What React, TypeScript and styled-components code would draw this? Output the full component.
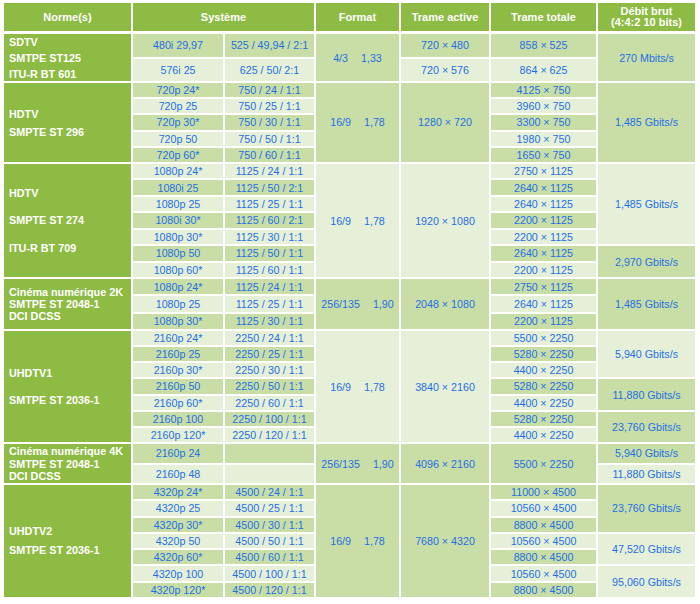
import React from "react";
import styled, { createGlobalStyle } from "styled-components";

const Global = createGlobalStyle`
  html, body { margin: 0; padding: 0; background: #ffffff; }
  body { font-family: "Liberation Sans", Arial, sans-serif; }
`;

const COLS = "127px 90px 89px 83px 88px 105px 97px";
const GREEN = "#8dbb43";
const DARK = "#c9dea6";
const LIGHT = "#e6f0d8";
const BLUE = "#1e6fe4";

const Page = styled.div`
  padding: 3px 0 0 4px;
  width: 700px;
  box-sizing: border-box;
`;

const Header = styled.div`
  display: grid;
  grid-template-columns: ${COLS};
  column-gap: 2px;
  height: 28px;
  margin-bottom: 3px;
`;

const HeadCell = styled.div<{ $span?: number }>`
  grid-column: span ${(p) => p.$span ?? 1};
  background: ${GREEN};
  color: #ffffff;
  font-weight: bold;
  font-size: 11px;
  line-height: 11px;
  display: flex;
  align-items: center;
  justify-content: center;
  text-align: center;
`;

const Body = styled.div`
  display: flex;
  flex-direction: column;
  gap: 2px;
`;

const Group = styled.div<{ $h: number; $n: number }>`
  display: grid;
  grid-template-columns: ${COLS};
  grid-template-rows: repeat(${(p) => p.$n}, 1fr);
  column-gap: 2px;
  row-gap: 2px;
  height: ${(p) => p.$h}px;
`;

const NormCell = styled.div<{ $n: number; $lh: number }>`
  grid-column: 1;
  grid-row: 1 / span ${(p) => p.$n};
  background: ${GREEN};
  color: #ffffff;
  font-weight: bold;
  font-size: 10.8px;
  line-height: ${(p) => p.$lh}px;
  padding: 1px 0 0 5px;
  display: flex;
  flex-direction: column;
  justify-content: center;
  white-space: nowrap;
`;

const Cell = styled.div<{ $dark: boolean; $col: number; $row: number; $span: number }>`
  grid-column: ${(p) => p.$col};
  grid-row: ${(p) => p.$row} / span ${(p) => p.$span};
  background: ${(p) => (p.$dark ? DARK : LIGHT)};
  color: ${BLUE};
  font-size: 10.7px;
  display: flex;
  align-items: center;
  justify-content: center;
  white-space: nowrap;
  gap: 13px;
`;

type Span = [string, number];

interface G {
  norm: string[];
  lh: number;
  h: number;
  n: number;
  dark0: boolean;
  sys1: Span[];
  sys2: Span[];
  fmt: [string, string];
  ta: Span[];
  tt: Span[];
  deb: Span[];
}

const one = (xs: string[]): Span[] => xs.map((x) => [x, 1]);

const groups: G[] = [
  {
    norm: ["SDTV", "SMTPE ST125", "ITU-R BT 601"],
    lh: 16,
    h: 47,
    n: 2,
    dark0: true,
    sys1: one(["480i 29,97", "576i 25"]),
    sys2: one(["525 / 49,94 / 2:1", "625 / 50/ 2:1"]),
    fmt: ["4/3", "1,33"],
    ta: one(["720 × 480", "720 × 576"]),
    tt: one(["858 × 525", "864 × 625"]),
    deb: [["270 Mbits/s", 2]],
  },
  {
    norm: ["HDTV", "SMPTE ST 296"],
    lh: 18,
    h: 79,
    n: 5,
    dark0: true,
    sys1: one(["720p 24*", "720p 25", "720p 30*", "720p 50", "720p 60*"]),
    sys2: one(["750 / 24 / 1:1", "750 / 25 / 1:1", "750 / 30 / 1:1", "750 / 50 / 1:1", "750 / 60 / 1:1"]),
    fmt: ["16/9", "1,78"],
    ta: [["1280 × 720", 5]],
    tt: one(["4125 × 750", "3960 × 750", "3300 × 750", "1980 × 750", "1650 × 750"]),
    deb: [["1,485 Gbits/s", 5]],
  },
  {
    norm: ["HDTV", "SMPTE ST 274", "ITU-R BT 709"],
    lh: 27.5,
    h: 113,
    n: 7,
    dark0: false,
    sys1: one(["1080p 24*", "1080i 25", "1080p 25", "1080i 30*", "1080p 30*", "1080p 50", "1080p 60*"]),
    sys2: one([
      "1125 / 24 / 1:1",
      "1125 / 50 / 2:1",
      "1125 / 25 / 1:1",
      "1125 / 60 / 2:1",
      "1125 / 30 / 1:1",
      "1125 / 50 / 1:1",
      "1125 / 60 / 1:1",
    ]),
    fmt: ["16/9", "1,78"],
    ta: [["1920 × 1080", 7]],
    tt: one([
      "2750 × 1125",
      "2640 × 1125",
      "2640 × 1125",
      "2200 × 1125",
      "2200 × 1125",
      "2640 × 1125",
      "2200 × 1125",
    ]),
    deb: [
      ["1,485 Gbits/s", 5],
      ["2,970 Gbits/s", 2],
    ],
  },
  {
    norm: ["Cinéma numérique 2K", "SMTPE ST 2048-1", "DCI DCSS"],
    lh: 12,
    h: 50,
    n: 3,
    dark0: true,
    sys1: one(["1080p 24*", "1080p 25", "1080p 30*"]),
    sys2: one(["1125 / 24 / 1:1", "1125 / 25 / 1:1", "1125 / 30 / 1:1"]),
    fmt: ["256/135", "1,90"],
    ta: [["2048 × 1080", 3]],
    tt: one(["2750 × 1125", "2640 × 1125", "2200 × 1125"]),
    deb: [["1,485 Gbits/s", 3]],
  },
  {
    norm: ["UHDTV1", "SMTPE ST 2036-1"],
    lh: 27.5,
    h: 111,
    n: 7,
    dark0: false,
    sys1: one(["2160p 24*", "2160p 25", "2160p 30*", "2160p 50", "2160p 60*", "2160p 100", "2160p 120*"]),
    sys2: one([
      "2250 / 24 / 1:1",
      "2250 / 25 / 1:1",
      "2250 / 30 / 1:1",
      "2250 / 50 / 1:1",
      "2250 / 60 / 1:1",
      "2250 / 100 / 1:1",
      "2250 / 120 / 1:1",
    ]),
    fmt: ["16/9", "1,78"],
    ta: [["3840 × 2160", 7]],
    tt: one([
      "5500 × 2250",
      "5280 × 2250",
      "4400 × 2250",
      "5280 × 2250",
      "4400 × 2250",
      "5280 × 2250",
      "4400 × 2250",
    ]),
    deb: [
      ["5,940 Gbits/s", 3],
      ["11,880 Gbits/s", 2],
      ["23,760 Gbits/s", 2],
    ],
  },
  {
    norm: ["Cinéma numérique 4K", "SMTPE ST 2048-1", "DCI DCSS"],
    lh: 12.5,
    h: 39,
    n: 2,
    dark0: true,
    sys1: one(["2160p 24", "2160p 48"]),
    sys2: one(["", ""]),
    fmt: ["256/135", "1,90"],
    ta: [["4096 × 2160", 2]],
    tt: [["5500 × 2250", 2]],
    deb: [
      ["5,940 Gbits/s", 1],
      ["11,880 Gbits/s", 1],
    ],
  },
  {
    norm: ["UHDTV2", "SMTPE ST 2036-1"],
    lh: 19,
    h: 112,
    n: 7,
    dark0: true,
    sys1: one(["4320p 24*", "4320p 25", "4320p 30*", "4320p 50", "4320p 60*", "4320p 100", "4320p 120*"]),
    sys2: one([
      "4500 / 24 / 1:1",
      "4500 / 25 / 1:1",
      "4500 / 30 / 1:1",
      "4500 / 50 / 1:1",
      "4500 / 60 / 1:1",
      "4500 / 100 / 1:1",
      "4500 / 120 / 1:1",
    ]),
    fmt: ["16/9", "1,78"],
    ta: [["7680 × 4320", 7]],
    tt: one([
      "11000 × 4500",
      "10560 × 4500",
      "8800 × 4500",
      "10560 × 4500",
      "8800 × 4500",
      "10560 × 4500",
      "8800 × 4500",
    ]),
    deb: [
      ["23,760 Gbits/s", 3],
      ["47,520 Gbits/s", 2],
      ["95,060 Gbits/s", 2],
    ],
  },
];

function Column({ items, col, dark0 }: { items: Span[]; col: number; dark0: boolean }) {
  let row = 1;
  return (
    <>
      {items.map(([text, span], i) => {
        const r = row;
        row += span;
        const dark = (r - 1) % 2 === 0 ? dark0 : !dark0;
        return (
          <Cell key={i} $col={col} $row={r} $span={span} $dark={dark}>
            {text}
          </Cell>
        );
      })}
    </>
  );
}

function GroupBlock({ g }: { g: G }) {
  return (
    <Group $h={g.h} $n={g.n}>
      <NormCell $n={g.n} $lh={g.lh}>
        {g.norm.map((l, i) => (
          <span key={i}>{l}</span>
        ))}
      </NormCell>
      <Column items={g.sys1} col={2} dark0={g.dark0} />
      <Column items={g.sys2} col={3} dark0={g.dark0} />
      <Cell $col={4} $row={1} $span={g.n} $dark={g.dark0}>
        <span>{g.fmt[0]}</span>
        <span>{g.fmt[1]}</span>
      </Cell>
      <Column items={g.ta} col={5} dark0={g.dark0} />
      <Column items={g.tt} col={6} dark0={g.dark0} />
      <Column items={g.deb} col={7} dark0={g.dark0} />
    </Group>
  );
}

export default function App() {
  return (
    <>
      <Global />
      <Page>
        <Header>
          <HeadCell>Norme(s)</HeadCell>
          <HeadCell $span={2}>Système</HeadCell>
          <HeadCell>Format</HeadCell>
          <HeadCell>Trame active</HeadCell>
          <HeadCell>Trame totale</HeadCell>
          <HeadCell>
            Débit brut
            <br />
            (4:4:2 10 bits)
          </HeadCell>
        </Header>
        <Body>
          {groups.map((g, i) => (
            <GroupBlock key={i} g={g} />
          ))}
        </Body>
      </Page>
    </>
  );
}
